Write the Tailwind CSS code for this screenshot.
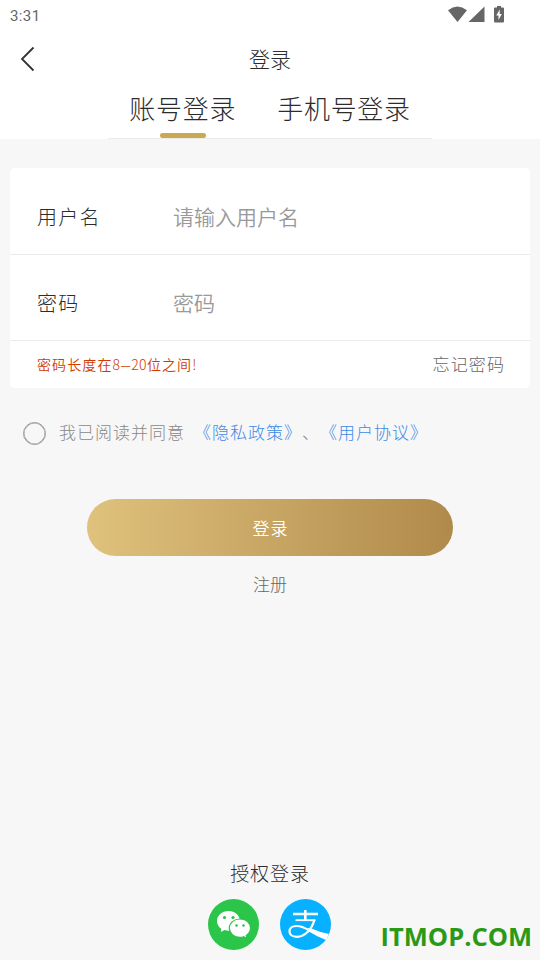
<!DOCTYPE html>
<html lang="zh-CN">
<head>
<meta charset="utf-8">
<title>登录</title>
<script src="https://cdn.jsdelivr.net/npm/@tailwindcss/browser@4"></script>
</head>
<body class="bg-[#f7f7f7]">
<div class="relative flex h-[960px] w-[540px] flex-col overflow-hidden bg-[#f7f7f7] font-['Noto_Sans_CJK_SC',sans-serif] font-light text-[#2c2c2c] whitespace-nowrap">
  <header class="flex h-[139px] flex-col bg-white">
    <div class="flex h-8 items-center justify-between pr-[34px] pl-[10px]">
      <span class="font-[Roboto,sans-serif] text-[15px] leading-8 font-normal tracking-[0.4px] text-[#666]">3:31</span>
      <svg class="-mt-[3px] h-[18px] w-[58px]" viewBox="0 0 58 18" fill="#666">
        <path d="M0 4.200Q9.500-3.200 19 4.200L9.500 16Z"/>
        <path d="M36.500 .500V16H20.500Z"/>
        <path d="M49 0h4v1.500h2q1 0 1 1V15.500q0 1-1 1h-8q-1 0-1-1V2.500q0-1 1-1h2z"/>
        <path d="M51.700 3.500 48.300 9.500H50.500V14L53.800 8H51.700Z" fill="#fff"/>
      </svg>
    </div>
    <div class="grid h-[54px] grid-cols-3 items-center px-5">
      <svg class="h-[26px] w-[16px]" viewBox="0 0 16 26" fill="none" stroke="#333" stroke-width="1.800"><path d="M13.500 1.500 2 13l11.500 11.500"/></svg>
      <h1 class="-mt-[2px] text-center text-[21px] leading-[30px]">登录</h1>
    </div>
    <nav class="mx-auto flex h-[53px] w-[324px] justify-center gap-[41px] border-b border-[#ebebeb]">
      <div class="flex w-[107px] flex-col items-center">
        <span class="mt-[2px] h-[45px] text-[26px] leading-[40px] tracking-[0.7px]">账号登录</span>
        <i class="h-[5px] w-[46px] rounded-full bg-[#c9a850]"></i>
      </div>
      <span class="mt-[2px] text-[26px] leading-[40px] tracking-[0.7px]">手机号登录</span>
    </nav>
  </header>

  <section class="mx-[10px] mt-[29px] h-[220px] rounded-[5px] bg-white">
    <div class="flex h-[87px] items-center border-b border-[#ebebeb] pt-[12px] pl-[27px]">
      <label class="w-[136px] text-[20px] tracking-[1.200px]">用户名</label>
      <span class="text-[21px] font-[350] text-[#999]">请输入用户名</span>
    </div>
    <div class="flex h-[86px] items-center border-b border-[#ebebeb] pt-[10px] pl-[27px]">
      <label class="w-[136px] text-[20px] tracking-[1.200px]">密码</label>
      <span class="text-[21px] font-[350] text-[#999]">密码</span>
    </div>
    <div class="flex h-[47px] items-center justify-between pr-[25px] pl-[27px]">
      <span class="flex text-[14px] font-[350] tracking-[1.100px] text-[#d03c00]">密码长度在<span class="font-light tracking-[0.300px]">8</span><span class="inline-block w-[11px] scale-x-150 text-center tracking-normal">–</span><span class="font-light tracking-[0.300px]">20</span>位之间<span class="font-light">!</span></span>
      <span class="-mt-[2px] text-[17px] tracking-[1.100px] text-[#666]">忘记密码</span>
    </div>
  </section>

  <div class="mt-[32px] flex h-[26px] items-center pl-[23px] text-[17px] tracking-[1px] text-[#888]">
    <i class="mr-[13px] size-[23px] rounded-full border-[1.500px] border-[#999] shadow-[inset_0_0_0_0.500px_#999]"></i>
    <div class="-mt-[2px] flex">
      <span>我已阅读并同意</span><span class="ml-[9px] text-[#3b8ae6]">《隐私政策》</span><span>、</span><span class="text-[#3b8ae6]">《用户协议》</span>
    </div>
  </div>

  <button class="mx-auto mt-[53px] h-[57px] w-[366px] rounded-full bg-linear-to-r from-[#dfc27c] to-[#b08a4b] pl-[1px] text-[17px] font-[350] tracking-[1px] text-white">登录</button>
  <a class="mt-[15px] text-center text-[17px] leading-[26px] text-[#666]">注册</a>

  <footer class="mt-[262px] flex flex-col items-center">
    <span class="text-[19px] leading-[28px] tracking-[0.900px]">授权登录</span>
    <div class="mt-[12px] mr-px flex gap-[21px]">
      <svg class="size-[51px]" viewBox="0 0 51 51">
        <circle cx="25.500" cy="25.500" r="25.500" fill="#2bc549"/>
        <path d="M20.500 12C14 12 9 16.500 9 22c0 3.200 1.700 6 4.300 7.900L12.800 33l3.600-1.900c1.300.500 2.700.7 4.100.7 6.500 0 11.500-4.400 11.500-9.800S27 12 20.500 12Z" fill="#fff"/>
        <path d="M32 20c-6 0-10.700 4-10.700 9.100S26 38.300 32 38.300c1.300 0 2.500-.2 3.600-.6L39 39.500l-.8-2.900c2.500-1.700 4.300-4.400 4.300-7.500 0-5.100-4.500-9.100-10.500-9.100Z" fill="#fff" stroke="#2bc549" stroke-width="1.200"/>
        <g fill="#2bc549"><circle cx="16.500" cy="18.500" r="1.600"/><circle cx="25" cy="18.500" r="1.600"/><circle cx="28.500" cy="26.500" r="1.300"/><circle cx="35.500" cy="26.500" r="1.300"/></g>
      </svg>
      <svg class="size-[51px]" viewBox="0 0 51 51">
        <circle cx="25.500" cy="25.500" r="25.500" fill="#08b1ff"/>
        <g fill="none" stroke="#fff">
          <path d="M13 15H38M25.300 11V22" stroke-width="2.600"/>
          <path d="M15.500 21.200H35.500" stroke-width="1.800"/>
          <path d="M34.300 21C32 30 25 37.800 17 37.800c-5 0-7.500-2.500-7.500-5.300 0-3.500 3-5.500 7-5.500 5 0 9 2 14 5" stroke-width="2.200"/>
        </g>
        <path d="M28 29 31.500 29.500Q39 33 49 35L46 41Q36 37 27 31.500Z" fill="#fff"/>
      </svg>
    </div>
  </footer>
  <div class="absolute right-[8px] bottom-[6px] font-['Open_Sans',sans-serif] text-[25.500px] leading-[36px] font-bold text-[#2a9a16]">ITMOP.COM</div>
</div>
</body>
</html>
